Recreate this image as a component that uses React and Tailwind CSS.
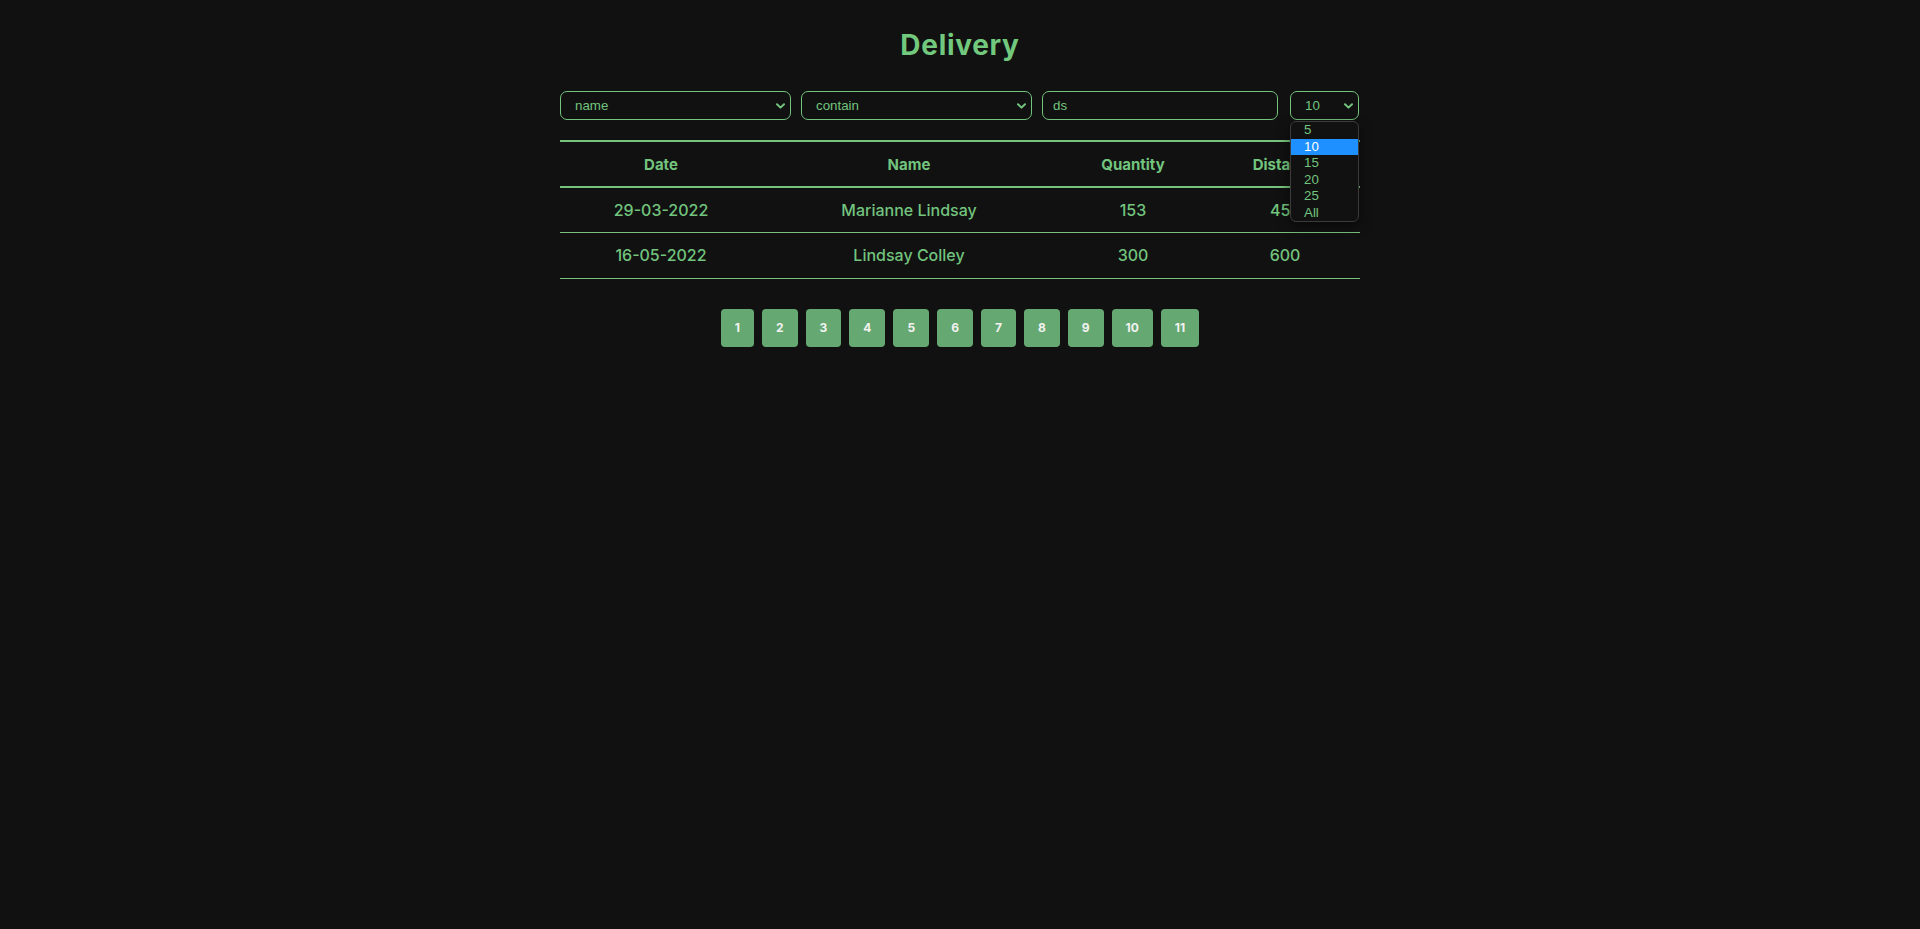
import React, { useState } from "react";

const rows = [
  { date: "29-03-2022", name: "Marianne Lindsay", quantity: 153, distance: 452 },
  { date: "16-05-2022", name: "Lindsay Colley", quantity: 300, distance: 600 },
];

const pageSizes = ["5", "10", "15", "20", "25", "All"];
const pages = [1, 2, 3, 4, 5, 6, 7, 8, 9, 10, 11];

function Chevron() {
  return (
    <svg
      className="pointer-events-none absolute right-[6px] top-1/2 -translate-y-1/2 w-[9px] h-[6px] text-[#72c47e]"
      viewBox="0 0 9 6"
      fill="none"
    >
      <path d="M1 1.2 L4.5 4.6 L8 1.2" stroke="currentColor" strokeWidth="2" strokeLinecap="round" strokeLinejoin="round" />
    </svg>
  );
}

function Select({ value, options, className }) {
  return (
    <div className={`relative ${className}`}>
      <select
        defaultValue={value}
        className="appearance-none w-full h-[29px] pl-[14px] pr-6 rounded-[7px] border border-[#72c47e] bg-[#111111] text-[#72c47e] text-[13.33px] outline-none"
        style={{ fontFamily: '"Liberation Sans", Arial, sans-serif' }}
      >
        {options.map((o) => (
          <option key={o}>{o}</option>
        ))}
      </select>
      <Chevron />
    </div>
  );
}

export default function App() {
  const [filter, setFilter] = useState("ds");

  return (
    <div
      className="min-h-screen w-full bg-[#111111] text-[#72c47e]"
      style={{ fontFamily: "Inter, 'Noto Sans', sans-serif" }}
    >
      <div className="w-[800px] mx-auto pt-[27px]">
        <h1 className="text-center text-[28px] leading-[36px] font-bold tracking-[0.025em] text-[#72c97e]">
          Delivery
        </h1>

        {/* filters */}
        <div className="mt-[28px] flex gap-[10px]">
          <Select value="name" options={["name", "date", "quantity", "distance"]} className="w-[231px]" />
          <Select value="contain" options={["contain", "equal", "greater", "less"]} className="w-[231px]" />
          <input
            value={filter}
            onChange={(e) => setFilter(e.target.value)}
            className="w-[236px] h-[29px] pl-[10px] rounded-[7px] border border-[#72c47e] bg-[#111111] text-[#72c47e] text-[13.33px] outline-none"
            style={{ fontFamily: '"Liberation Sans", Arial, sans-serif' }}
          />
          <div className="relative ml-[2px] w-[69px]">
            <Select value="10" options={pageSizes} className="w-full" />
            {/* open dropdown list */}
            <div
              className="absolute left-0 top-full mt-px z-10 w-full rounded-[6px] border border-[#3b3b3b] bg-[#111111] shadow-[0_4px_12px_rgba(0,0,0,0.5)] text-[13.33px] leading-[16.5px]"
              style={{ fontFamily: '"Liberation Sans", Arial, sans-serif' }}
            >
              {pageSizes.map((s) => (
                <div
                  key={s}
                  className={`pl-[13px] ${s === "10" ? "bg-[#1e90ff] text-white" : "text-[#72c47e]"}`}
                >
                  {s}
                </div>
              ))}
            </div>
          </div>
        </div>

        {/* table */}
        <table className="mt-[20px] w-full table-fixed border-collapse">
          <colgroup>
            <col className="w-[202px]" />
            <col className="w-[294px]" />
            <col className="w-[154px]" />
            <col className="w-[150px]" />
          </colgroup>
          <thead>
            <tr className="border-y-2 border-[#77c27d]">
              <th className="h-[46px] pt-[2px] text-[15px] font-bold">Date</th>
              <th className="h-[46px] pt-[2px] text-[15px] font-bold">Name</th>
              <th className="h-[46px] pt-[2px] text-[15px] font-bold">Quantity</th>
              <th className="h-[46px] pt-[2px] text-[15px] font-bold">Distance</th>
            </tr>
          </thead>
          <tbody>
            {rows.map((r) => (
              <tr key={r.date} className="border-b border-[#77c27d]">
                <td className="h-[45.5px] text-center text-[16px] font-medium">{r.date}</td>
                <td className="h-[45.5px] text-center text-[16px] font-medium">{r.name}</td>
                <td className="h-[45.5px] text-center text-[16px] font-medium">{r.quantity}</td>
                <td className="h-[45.5px] text-center text-[16px] font-medium">{r.distance}</td>
              </tr>
            ))}
          </tbody>
        </table>

        {/* pagination */}
        <div className="mt-[30px] flex justify-center gap-[8px]">
          {pages.map((p) => (
            <button
              key={p}
              className="h-[38px] px-[14px] rounded-[4px] bg-[#66a871] text-[#f2f2f2] text-[12px] font-bold"
            >
              {p}
            </button>
          ))}
        </div>
      </div>
    </div>
  );
}
